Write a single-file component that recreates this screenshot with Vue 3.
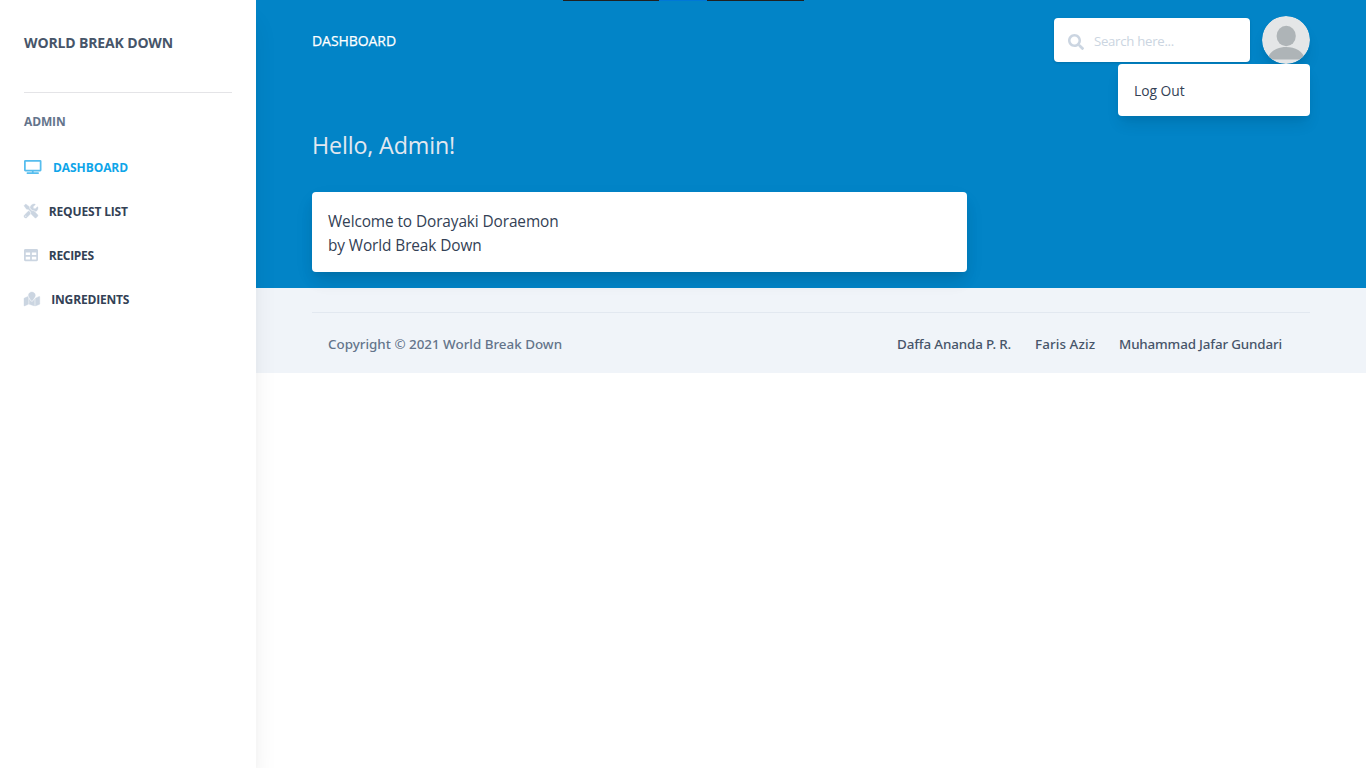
<script setup>
const nav = [
  {
    label: 'DASHBOARD', id: 'dashboard', width: 17.5, box: '0 0 640 512', active: true,
    d: 'M592 0H48A48 48 0 0 0 0 48v320a48 48 0 0 0 48 48h240v32H112a16 16 0 0 0-16 16v32a16 16 0 0 0 16 16h416a16 16 0 0 0 16-16v-32a16 16 0 0 0-16-16H352v-32h240a48 48 0 0 0 48-48V48a48 48 0 0 0-48-48zm-16 352H64V64h512z',
  },
  {
    label: 'REQUEST LIST', id: 'request', width: 14, box: '0 0 512 512',
    d: 'M501.1 395.7L384 278.6c-23.1-23.1-57.6-27.6-85.4-13.9L192 158.1V96L64 0 0 64l96 128h62.1l106.6 106.6c-13.6 27.8-9.2 62.3 13.9 85.4l117.1 117.1c14.6 14.6 38.2 14.6 52.7 0l52.7-52.7c14.5-14.6 14.5-38.2 0-52.7zM331.7 225c28.3 0 54.9 11 74.9 31l19.4 19.4c15.8-6.9 30.8-16.5 43.8-29.5 37.1-37.1 49.7-89.3 37.9-136.7-2.2-9-13.5-12.1-20.1-5.5l-74.4 74.4-67.9-11.3L334 98.9l74.4-74.4c6.6-6.6 3.4-17.9-5.7-20.2-47.4-11.7-99.6.9-136.6 37.9-28.5 28.5-41.9 66.1-41.2 103.6l82.1 82.1c8.1-1.9 16.5-2.9 24.7-2.9zm-103.9 82l-56.7-56.7L18.7 402.8c-25 25-25 65.5 0 90.5s65.5 25 90.5 0l123.6-123.6c-7.6-19.9-9.9-41.6-5-62.7zM64 472c-13.2 0-24-10.8-24-24 0-13.3 10.7-24 24-24s24 10.7 24 24c0 13.2-10.7 24-24 24z',
  },
  {
    label: 'RECIPES', id: 'recipes', width: 14, box: '0 0 512 512',
    d: 'M464 32H48C21.49 32 0 53.49 0 80v352c0 26.51 21.49 48 48 48h416c26.51 0 48-21.49 48-48V80c0-26.51-21.49-48-48-48zM224 416H64v-96h160v96zm0-160H64v-96h160v96zm224 160H288v-96h160v96zm0-160H288v-96h160v96z',
  },
  {
    label: 'INGREDIENTS', id: 'ingredients', width: 15.75, box: '0 0 576 512',
    d: 'M288 0c-69.59 0-126 56.41-126 126 0 56.26 82.35 158.8 113.9 196.02 6.39 7.54 17.82 7.54 24.2 0C331.65 284.8 414 182.26 414 126 414 56.41 357.59 0 288 0zM20.12 215.95A32.006 32.006 0 0 0 0 245.66v250.32c0 11.32 11.43 19.06 21.94 14.86L160 448V214.92c-8.84-15.98-16.07-31.54-21.25-46.42L20.12 215.95zM288 359.67c-14.07 0-27.38-6.18-36.51-16.96-19.66-23.2-40.57-49.62-59.49-76.72v182l192 64V266c-18.92 27.09-39.82 53.52-59.49 76.72-9.13 10.77-22.44 16.95-36.51 16.95zm266.06-198.51L416 224v288l139.88-55.95A31.996 31.996 0 0 0 576 426.34V176.02c0-11.32-11.43-19.06-21.94-14.86z',
  },
]
</script>

<template>
  <div class="page">
    <aside class="sidebar">
      <a class="brand">WORLD BREAK DOWN</a>
      <hr class="rule">
      <h6 class="group">ADMIN</h6>
      <ul class="nav">
        <li v-for="item in nav" :key="item.id">
          <a class="nav-link" :class="[item.id, { active: item.active }]">
            <svg class="nav-icon" :width="item.width" height="14" :viewBox="item.box"><path :d="item.d" /></svg>
            <span>{{ item.label }}</span>
          </a>
        </li>
      </ul>
    </aside>

    <div class="main">
      <div class="hero">
        <div class="strip"><i class="dark" /><i class="light" /><i class="dark last" /></div>
        <nav class="topbar">
          <a class="title">DASHBOARD</a>
          <div class="tools">
            <label class="search">
              <svg width="16" height="16" viewBox="0 0 512 512"><path d="M505 442.7L405.3 343c-4.5-4.5-10.6-7-17-7H372c27.6-35.3 44-79.7 44-128C416 93.1 322.9 0 208 0S0 93.1 0 208s93.1 208 208 208c48.3 0 92.7-16.4 128-44v16.3c0 6.4 2.5 12.5 7 17l99.7 99.7c9.4 9.4 24.6 9.4 33.9 0l28.3-28.3c9.4-9.4 9.4-24.6.1-34zM208 336c-70.7 0-128-57.2-128-128 0-70.7 57.2-128 128-128 70.7 0 128 57.2 128 128 0 70.7-57.2 128-128 128z" /></svg>
              <input type="text" placeholder="Search here...">
            </label>
            <div class="account">
              <svg class="avatar" width="48" height="48" viewBox="0 0 48 48">
                <defs><clipPath id="round"><circle cx="24" cy="24" r="24" /></clipPath></defs>
                <g clip-path="url(#round)">
                  <rect width="48" height="48" fill="#e4e6e7" />
                  <ellipse cx="24.2" cy="20" rx="9.6" ry="10.2" fill="#aeb4b7" />
                  <path d="M5 43.5C8 35 15 31 24.2 31S40.5 35 43.5 43.5z" fill="#aeb4b7" />
                </g>
              </svg>
              <div class="menu"><a>Log Out</a></div>
            </div>
          </div>
        </nav>
        <h1 class="hello">Hello, Admin!</h1>
        <section class="card">
          <div>Welcome to Dorayaki Doraemon</div>
          <div>by World Break Down</div>
        </section>
      </div>
      <footer class="footer">
        <hr>
        <div class="foot-row">
          <span class="copy">Copyright © 2021 World Break Down</span>
          <ul class="authors">
            <li class="a1">Daffa Ananda P. R.</li>
            <li class="a2">Faris Aziz</li>
            <li class="a3">Muhammad Jafar Gundari</li>
          </ul>
        </div>
      </footer>
    </div>
  </div>
</template>

<style scoped>
* { box-sizing: border-box; }
.page {
  display: flex;
  height: 768px;
  overflow: hidden;
  background: #fff;
  color: #334155;
  font: 400 16px/24px "Open Sans", "Noto Sans", sans-serif;
  white-space: nowrap;
}
ul { list-style: none; margin: 0; padding: 0; }
.sidebar {
  position: relative;
  z-index: 2;
  flex: none;
  width: 256px;
  height: 768px;
  padding: 16px 24px;
  background: #fff;
  box-shadow: 0 20px 25px -5px rgba(0, 0, 0, .1), 0 10px 10px -5px rgba(0, 0, 0, .04);
}
.brand {
  display: block;
  padding: 15px 0 37px;
  color: #475569;
  font-weight: 700;
  font-size: 14px;
  letter-spacing: -.146px;
}
.rule { height: 1px; margin: 0; border: 0; background: #e4e4e7; }
.group {
  margin: 0;
  padding: 21px 0 9px;
  color: #64748b;
  font-weight: 700;
  font-size: 12px;
  line-height: 16px;
  letter-spacing: -.141px;
}
.nav { padding-top: 6px; }
.nav-link {
  display: flex;
  align-items: center;
  height: 44px;
  color: #334155;
  font-weight: 700;
  font-size: 12px;
}
.nav-link span { margin-left: 11.5px; padding-top: 2px; }
.nav-icon { flex: none; margin-bottom: 1px; fill: #cbd5e1; overflow: visible; }
.request .nav-icon, .ingredients .nav-icon { stroke: #cbd5e1; stroke-width: 14px; }
.active { color: #0ea5e9; }
.active .nav-icon { fill: #56bdee; }
.dashboard { letter-spacing: -.072px; }
.request { letter-spacing: -.164px; }
.recipes { letter-spacing: -.304px; }
.request span, .recipes span { margin-left: 10.8px; }
.ingredients { letter-spacing: -.177px; }
.main { flex: 1; min-width: 0; }
.hero { position: relative; height: 288px; padding: 0 56px; background: #0284c7; }
.strip { position: absolute; top: 0; left: 307px; display: flex; height: 1px; }
.strip i { width: 96px; height: 1px; }
.strip .dark { background: #202020; }
.strip .light { width: 48px; background: #0078d7; }
.strip .last { width: 97px; }
.topbar { display: flex; align-items: center; justify-content: space-between; height: 80px; }
.title {
  margin-top: 2px;
  color: #fff;
  font-size: 14px;
  font-weight: 500;
  letter-spacing: -.066px;
  -webkit-text-stroke: .25px #fff;
}
.tools { display: flex; align-items: center; gap: 12px; }
.search {
  display: flex;
  align-items: center;
  width: 196px;
  height: 44px;
  padding: 3px 12px 0 14px;
  border-radius: 4px;
  background: #fff;
  box-shadow: 0 1px 3px rgba(0, 0, 0, .1), 0 1px 2px rgba(0, 0, 0, .06);
}
.search svg { flex: none; fill: #cbd5e1; }
.search input {
  width: 140px;
  height: 24px;
  margin: -1px 0 0 10px;
  padding: 0;
  border: 0;
  outline: 0;
  background: none;
  font: 400 13.2px/24px "Open Sans", sans-serif;
  letter-spacing: -.28px;
}
.search input::placeholder { color: #cbd5e1; opacity: 1; }
.account { position: relative; width: 48px; height: 48px; }
.avatar { display: block; border-radius: 50%; box-shadow: 0 10px 15px -3px rgba(0, 0, 0, .1), 0 4px 6px -2px rgba(0, 0, 0, .05); }
.menu {
  position: absolute;
  top: 48px;
  right: 0;
  width: 192px;
  height: 52px;
  padding: 15px 16px;
  border-radius: 4px;
  background: #fff;
  box-shadow: 0 10px 15px -3px rgba(0, 0, 0, .1), 0 4px 6px -2px rgba(0, 0, 0, .05);
  font-size: 13.8px;
}
.hello {
  margin: 49px 0 0;
  color: #e2e8f0;
  font-size: 23.3px;
  line-height: 32px;
  font-weight: 400;
  letter-spacing: -.15px;
}
.card {
  width: 655px;
  height: 80px;
  margin-top: 31px;
  padding: 18px 16px 14px;
  border-radius: 4px;
  background: #fff;
  box-shadow: 0 10px 15px -3px rgba(0, 0, 0, .1), 0 4px 6px -2px rgba(0, 0, 0, .05), 0 8px 24px rgba(0, 0, 0, .04);
  font-size: 15.4px;
  letter-spacing: -.1px;
}
.footer { height: 85px; padding: 24px 56px 0; background: #f0f4f9; }
.footer hr { height: 1px; margin: 0; border: 0; background: #e2e8f0; }
.foot-row {
  display: flex;
  justify-content: space-between;
  padding: 19px 28px 0 16px;
  font: 500 13.4px/24px "Noto Sans", sans-serif;
}
.copy { color: #64748b; }
.authors { display: flex; gap: 24px; color: #475569; }
.a1 { width: 114px; letter-spacing: -.13px; }
.a2 { width: 60px; letter-spacing: .1px; }
.a3 { width: 163px; letter-spacing: -.16px; }
</style>
